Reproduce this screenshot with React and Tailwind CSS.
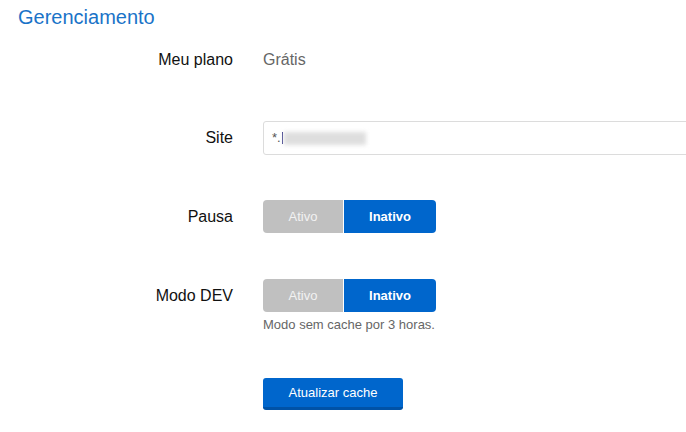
import React from 'react';

const Toggle = ({ active }) => (
  <div className="flex gap-[1px] h-[33px] w-[173px] rounded-[4px] overflow-hidden bg-white">
    <button
      type="button"
      className={`w-[80px] text-[13px] ${active ? 'bg-[#0066cc] text-white font-bold' : 'bg-[#c0c0c0] text-[#f2f2f2]'}`}
    >
      Ativo
    </button>
    <button
      type="button"
      className={`w-[92px] text-[13px] ${active ? 'bg-[#c0c0c0] text-[#f2f2f2]' : 'bg-[#0066cc] text-white font-bold'}`}
    >
      Inativo
    </button>
  </div>
);

const Row = ({ label, height, className = '', children }) => (
  <div className={`flex items-start ${className}`}>
    <div className={`w-[233px] ${height} flex items-center justify-end text-[16px] leading-[20px] text-[#111]`}>
      {label}
    </div>
    <div className="ml-[30px] flex-1 min-w-0">{children}</div>
  </div>
);

export default function App() {
  return (
    <div
      className="w-[686px] h-[432px] overflow-hidden bg-white"
      style={{ fontFamily: '"Liberation Sans", Arial, sans-serif' }}
    >
      <h2 className="pt-[5px] pl-[18px] text-[20px] leading-[24px] text-[#1a73c8]">Gerenciamento</h2>

      <Row label="Meu plano" height="h-[34px]" className="mt-[14px]">
        <div className="h-[34px] flex items-center text-[16px] text-[#666]">Grátis</div>
      </Row>

      <Row label="Site" height="h-[34px]" className="mt-[44px]">
        <div className="w-[440px] h-[34px] border border-[#dcdcdc] rounded-[3px] flex items-center pl-[8px] text-[13px] text-[#555]">
          <span>*.</span>
          <span className="w-[1px] h-[12px] bg-[#3a3a8a] ml-[1px]" />
          <span className="w-[82px] h-[13px] bg-[#dedede] blur-[2px] ml-[1px]" />
        </div>
      </Row>

      <Row label="Pausa" height="h-[33px]" className="mt-[45px]">
        <Toggle active={false} />
      </Row>

      <Row label="Modo DEV" height="h-[33px]" className="mt-[46px]">
        <Toggle active={false} />
        <p className="mt-[5px] text-[13px] leading-[16px] text-[#666]">Modo sem cache por 3 horas.</p>
        <button
          type="button"
          className="mt-[45px] w-[140px] h-[32px] bg-[#0066cc] border-b-[3px] border-[#0052a6] rounded-[3px] text-white text-[13px]"
        >
          Atualizar cache
        </button>
      </Row>
    </div>
  );
}
